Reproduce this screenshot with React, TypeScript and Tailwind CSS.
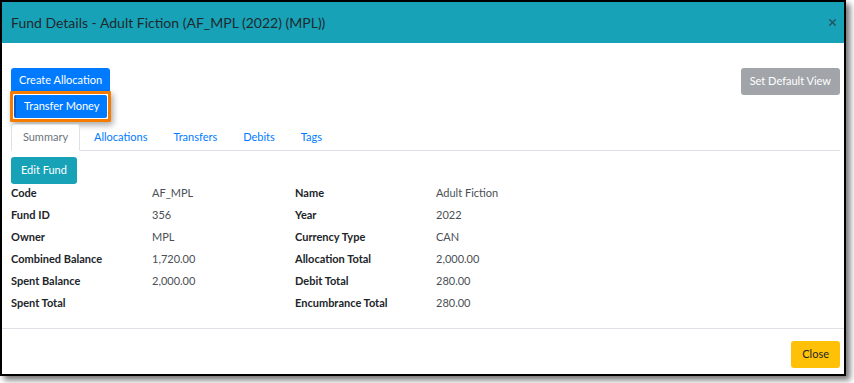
import { X } from "lucide-react";

const leftRows = [
  ["Code", "AF_MPL"],
  ["Fund ID", "356"],
  ["Owner", "MPL"],
  ["Combined Balance", "1,720.00"],
  ["Spent Balance", "2,000.00"],
  ["Spent Total", ""],
];

const rightRows = [
  ["Name", "Adult Fiction"],
  ["Year", "2022"],
  ["Currency Type", "CAN"],
  ["Allocation Total", "2,000.00"],
  ["Debit Total", "280.00"],
  ["Encumbrance Total", "280.00"],
];

const tabs = ["Allocations", "Transfers", "Debits", "Tags"];

export default function App() {
  return (
    <div className="h-[383px] w-[854px] overflow-hidden bg-white font-['Lato',sans-serif] text-[11px] text-[#212529]">
      <div className="flex h-[376px] w-[846px] flex-col border-2 border-black bg-white shadow-[4px_4px_6px_rgba(0,0,0,0.55)]">
        {/* header */}
        <div className="flex h-[41px] shrink-0 items-center justify-between bg-[#17a2b8] pl-[9px] pr-[6px]">
          <h1 className="text-[14px] leading-none text-[#1f2a2e]">
            Fund Details - Adult Fiction (AF_MPL (2022) (MPL))
          </h1>
          <X className="h-[11px] w-[11px] text-[#24525a]" strokeWidth={3} />
        </div>

        {/* body */}
        <div className="flex flex-1 flex-col pl-[9px] pr-[4px] pt-[25px]">
          <div className="flex items-start justify-between">
            <div className="flex flex-col items-start">
              <button className="h-[25px] rounded-[3px] bg-[#007bff] px-[8px] text-[11px] text-white">
                Create Allocation
              </button>
              <div className="-ml-[1px] mt-[-2px] rounded-[1px] border-[3px] border-[#f57c00] p-[1px] shadow-[2px_3px_6px_rgba(0,0,0,0.35)]">
                <button className="h-[23px] rounded-[2px] border-l-2 border-[#0a58ca] bg-[#007bff] px-[8px] text-[11px] text-white">
                  Transfer Money
                </button>
              </div>
            </div>
            <button className="h-[27px] rounded-[3px] bg-[#a1a5a9] px-[9px] text-[11px] text-white">
              Set Default View
            </button>
          </div>

          {/* tabs */}
          <div className="mt-[2px] flex h-[27px] items-stretch border-b border-[#dee2e6]">
            <div className="-mb-px flex w-[69px] items-center justify-center rounded-t-[3px] border border-b-white border-[#dee2e6] bg-white text-[#6c757d]">
              Summary
            </div>
            <div className="flex items-center gap-[26px] pl-[14px] text-[#007bff]">
              {tabs.map((t) => (
                <span key={t}>{t}</span>
              ))}
            </div>
          </div>

          <div className="pt-[6px]">
            <button className="h-[27px] rounded-[3px] bg-[#17a2b8] px-[10px] text-[11px] text-white">
              Edit Fund
            </button>
          </div>

          {/* summary grid */}
          <div className="-mt-[2px] flex">
            {[leftRows, rightRows].map((rows, c) => (
              <div key={c} className="flex w-[284px] flex-col">
                {rows.map(([label, value]) => (
                  <div key={label} className="flex h-[22px] items-center">
                    <span className="w-[141px] font-bold text-[#212529]">{label}</span>
                    <span className="text-[#4a4f55]">{value}</span>
                  </div>
                ))}
              </div>
            ))}
          </div>
        </div>

        {/* footer */}
        <div className="flex h-[46px] shrink-0 items-start justify-end border-t border-[#dee2e6] pr-[4px] pt-[12px]">
          <button className="h-[27px] rounded-[3px] bg-[#ffc107] px-[11px] text-[11px] text-[#212529]">
            Close
          </button>
        </div>
      </div>
    </div>
  );
}
